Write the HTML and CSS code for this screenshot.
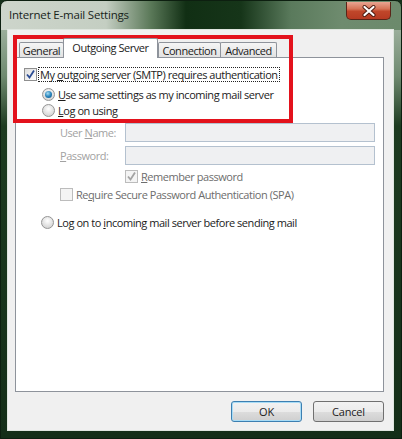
FILE: index.html
```html
<!DOCTYPE html>
<html lang="en">
<head>
    <meta charset="UTF-8">
    <meta name="viewport" content="width=device-width, initial-scale=1.0">
    <title>Internet E-mail Settings</title>
    <link rel="stylesheet" href="styles.css">
</head>
<body>
    <div class="window">
        <div class="titlebar">
            <span class="title">Internet E-mail Settings</span>
            <div class="close">
                <svg width="16" height="12" viewBox="0 0 16 12">
                    <path d="M3.5 2 L12.5 10 M12.5 2 L3.5 10" stroke="#4a1a10" stroke-width="4" stroke-linecap="round"/>
                    <path d="M3.5 2 L12.5 10 M12.5 2 L3.5 10" stroke="#ffffff" stroke-width="2.2" stroke-linecap="round"/>
                </svg>
            </div>
        </div>

        <div class="client">
            <div class="tabs">
                <div class="tab tab-general">General</div>
                <div class="tab tab-outgoing active">Outgoing Server</div>
                <div class="tab tab-connection">Connection</div>
                <div class="tab tab-advanced">Advanced</div>
            </div>

            <div class="panel">
                <div class="row row-auth">
                    <span class="check">
                        <svg width="11" height="11" viewBox="0 0 11 11"><path d="M2 5.5 L4.5 8.5 L9 1.5" fill="none" stroke="#2b4c94" stroke-width="1.8"/></svg>
                    </span>
                    <span class="label focus">My <u>o</u>utgoing server (SMTP) requires authentication</span>
                </div>
                <div class="row row-radio">
                    <span class="radio checked"></span>
                    <span class="label"><u>U</u>se same settings as my incoming mail server</span>
                </div>
                <div class="row row-radio row-tight">
                    <span class="radio"></span>
                    <span class="label"><u>L</u>og on using</span>
                </div>
                <div class="row row-field">
                    <span class="field-label">User <u>N</u>ame:</span>
                    <span class="input"></span>
                </div>
                <div class="row row-field row-field2">
                    <span class="field-label"><u>P</u>assword:</span>
                    <span class="input"></span>
                </div>
                <div class="row row-remember">
                    <span class="check disabled">
                        <svg width="11" height="11" viewBox="0 0 11 11"><path d="M2 5.5 L4.5 8.5 L9 1.5" fill="none" stroke="#a3a3a3" stroke-width="1.8"/></svg>
                    </span>
                    <span class="label muted"><u>R</u>emember password</span>
                </div>
                <div class="row row-spa">
                    <span class="check disabled"></span>
                    <span class="label muted">Re<u>q</u>uire Secure Password Authentication (SPA)</span>
                </div>
                <div class="row row-before">
                    <span class="radio"></span>
                    <span class="label">Log on to <u>i</u>ncoming mail server before sending mail</span>
                </div>
            </div>

            <div class="buttons">
                <button type="button" class="btn default">OK</button>
                <button type="button" class="btn">Cancel</button>
            </div>
        </div>

        <div class="highlight"></div>
    </div>
</body>
</html>
```

FILE: styles.css
```css
body {
    margin: 0;
    padding: 0;
    width: 402px;
    height: 439px;
    overflow: hidden;
    font-family: "Open Sans", "Noto Sans", sans-serif;
    font-size: 11px;
    letter-spacing: -0.45px;
    color: #1b1b1b;
    background: #15301a;
}
.window {
    position: relative;
    height: 439px;
    box-sizing: border-box;
    border: 1px solid #0d1f10;
    border-radius: 7px 7px 0 0;
    display: flex;
    flex-direction: column;
    background:
        linear-gradient(to right, #cdd5cb 0, #c4cec2 105px, #5a7858 150px, #112f14 185px, #163519 240px, #5a7a5c 290px, #6e8b6e 340px, #6c8a6c 100%) top / 100% 29px no-repeat,
        linear-gradient(to bottom, #9bae9b 29px, #6f8a70 75px, #1d3b20 125px, #142e18 100%);
}
.titlebar {
    height: 29px;
    display: flex;
    align-items: flex-start;
    padding-left: 8px;
}
.title {
    margin-top: 6px;
    font-size: 11.5px;
    letter-spacing: -0.2px;
    color: #18241a;
}
.close {
    margin-left: auto;
    margin-right: 10px;
    margin-top: 1px;
    width: 45px;
    height: 18px;
    box-sizing: border-box;
    border: 1px solid #5a2418;
    border-top: none;
    border-radius: 0 0 5px 5px;
    background: linear-gradient(to bottom, #e9a592 0, #d67457 40%, #c0462a 55%, #b63a22 100%);
    display: flex;
    align-items: center;
    justify-content: center;
}
.client {
    flex: 1;
    margin: 0 8px 8px 7px;
    padding: 8px 9px 8px 7px;
    background: #f0f0f0;
    display: flex;
    flex-direction: column;
    box-shadow: 0 0 0 1px #dfe6df;
}
.tabs {
    height: 19px;
    display: flex;
    align-items: flex-end;
    padding-left: 4px;
    position: relative;
    z-index: 1;
}
.tab {
    height: 15px;
    box-sizing: border-box;
    border: 1px solid #8e939b;
    border-bottom: none;
    border-radius: 2px 2px 0 0;
    background: linear-gradient(to bottom, #f5f5f5, #e2e2e2);
    display: flex;
    align-items: center;
    justify-content: center;
    line-height: 1;
}
.tab-general { width: 45px; }
.tab-outgoing { width: 95px; margin-left: -1px; }
.tab-connection { width: 63px; }
.tab-advanced { width: 57px; margin-left: -1px; }
.tab.active {
    height: 20px;
    margin-bottom: -1px;
    background: #ffffff;
    padding-bottom: 2px;
}
.panel {
    flex: 1;
    background: #ffffff;
    border: 1px solid #8e939b;
    padding: 8px 0 0 8px;
}
.row {
    height: 16px;
    display: flex;
    align-items: center;
}
.label {
    margin-left: 3px;
    white-space: nowrap;
}
.label.focus {
    margin-left: 1px;
    padding: 0 1px;
    line-height: 13px;
    border: 1px dotted #222;
}
.muted {
    color: #6d6d6d;
}
.check {
    width: 13px;
    height: 13px;
    box-sizing: border-box;
    border: 1px solid #8f8f8f;
    background: linear-gradient(135deg, #dcdcdc, #ffffff);
    display: flex;
    align-items: center;
    justify-content: center;
    flex: none;
}
.check.disabled {
    border-color: #bcbcbc;
    background: #f4f4f4;
}
.radio {
    width: 13px;
    height: 13px;
    box-sizing: border-box;
    border-radius: 50%;
    border: 1px solid #959595;
    background: radial-gradient(circle at 50% 35%, #ffffff 0, #e6e6e6 45%, #c9c9c9 100%);
    display: flex;
    align-items: center;
    justify-content: center;
    flex: none;
}
.radio.checked::after {
    content: "";
    width: 7px;
    height: 7px;
    border-radius: 50%;
    background: radial-gradient(circle at 40% 35%, #a8dcf2 0, #2a86bd 50%, #0e4f83 100%);
}
.row-radio { margin-top: 4px; padding-left: 18px; }
.row-tight { margin-top: 0; }
.row-field {
    height: 19px;
    margin-top: 5px;
    padding-left: 36px;
}
.row-field2 { margin-top: 4px; }
.field-label {
    width: 65px;
    color: #a2a2a2;
}
.input {
    width: 250px;
    height: 19px;
    box-sizing: border-box;
    border: 1px solid #b4c1cf;
    background: #eff0f2;
}
.row-remember { margin-top: 3px; padding-left: 101px; }
.row-spa { margin-top: 2px; padding-left: 36px; }
.row-before { margin-top: 12px; padding-left: 17px; }
.buttons {
    margin-top: 9px;
    height: 21px;
    display: flex;
    justify-content: flex-end;
    gap: 11px;
}
.btn {
    width: 71px;
    height: 21px;
    font-family: inherit;
    font-size: 11px;
    letter-spacing: -0.2px;
    color: #1b1b1b;
    border: 1px solid #707070;
    border-radius: 3px;
    background: linear-gradient(to bottom, #f2f2f2 0, #ebebeb 50%, #dddddd 51%, #cfcfcf 100%);
    padding: 0;
}
.btn.default {
    border-color: #3c7fb1;
    box-shadow: inset 0 0 0 1px #a8dcf6;
}
.highlight {
    position: absolute;
    left: 12px;
    top: 34px;
    width: 280px;
    height: 88px;
    box-sizing: border-box;
    border: 4px solid #e3121c;
    pointer-events: none;
}
```
